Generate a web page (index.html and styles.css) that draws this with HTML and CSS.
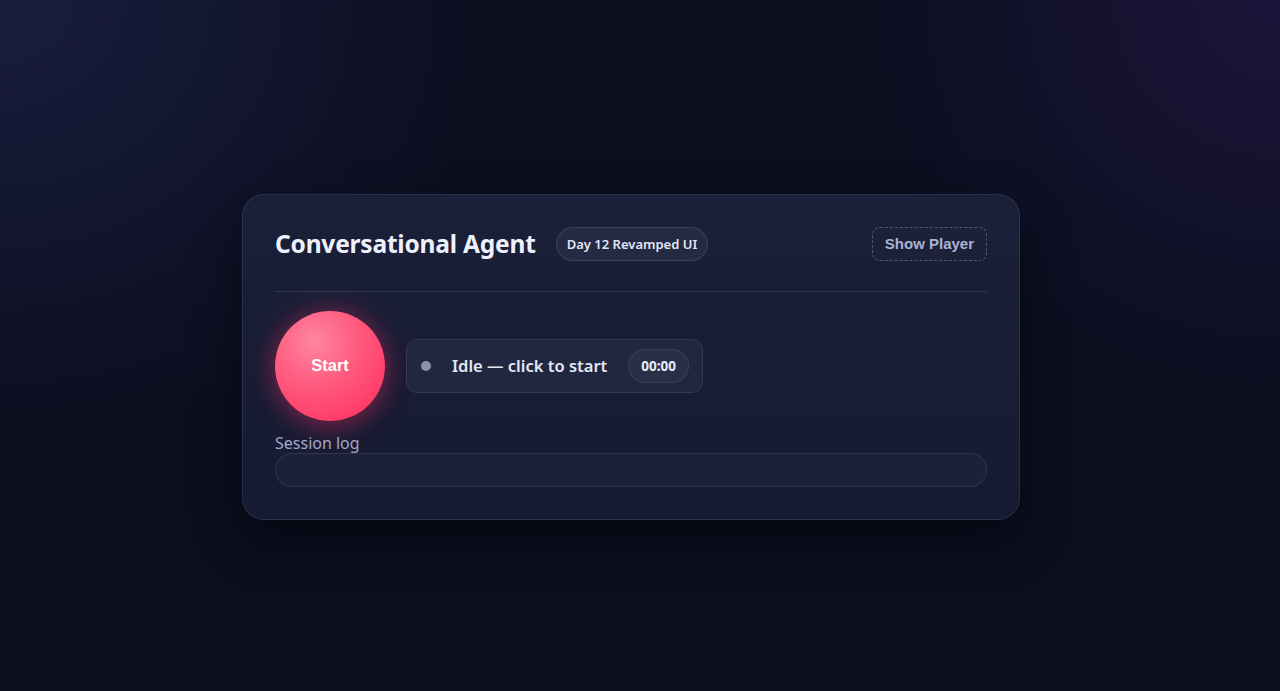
FILE: index.html
```html
<!DOCTYPE html>
<html lang="en">
<head>
<meta charset="utf-8">
<title>Conversational Agent</title>
<link rel="stylesheet" href="styles.css">
</head>
<body>
<main class="stage">
  <section class="card">
    <header class="card-header">
      <div class="title-group">
        <h1 class="title">Conversational Agent</h1>
        <span class="badge">Day 12 Revamped UI</span>
      </div>
      <button class="ghost-btn">Show Player</button>
    </header>
    <div class="divider"></div>
    <div class="controls">
      <button class="start-btn">Start</button>
      <div class="status">
        <span class="status-dot"></span>
        <span class="status-text">Idle — click to start</span>
        <span class="timer">00:00</span>
      </div>
    </div>
    <div class="log">
      <div class="log-label">Session log</div>
      <div class="log-box"></div>
    </div>
  </section>
</main>
</body>
</html>
```

FILE: styles.css
```css
* { box-sizing: border-box; }
html, body { margin: 0; height: 100%; }
body {
  font-family: "Noto Sans", "Open Sans", sans-serif;
  color: #e6e9f5;
  background:
    radial-gradient(ellipse 500px 440px at 0% 0%, rgba(34,36,78,0.65), rgba(34,36,78,0) 100%),
    radial-gradient(ellipse 420px 400px at 100% 0%, rgba(40,24,78,0.6), rgba(40,24,78,0) 100%),
    #0b0f1f;
}
.stage {
  min-height: 100vh;
  display: flex;
  align-items: center;
  justify-content: center;
  padding: 22px 18px 0 0;
}
.card {
  width: 778px;
  padding: 32px 32px 32px 32px;
  border-radius: 22px;
  background: linear-gradient(180deg, #1b2039 0%, #161a32 100%);
  border: 1px solid rgba(150,160,210,0.14);
  box-shadow: 0 20px 50px rgba(0,0,0,0.45);
}
.card-header {
  display: flex;
  align-items: center;
  justify-content: space-between;
  height: 34px;
}
.title-group { display: flex; align-items: center; gap: 20px; }
.title {
  margin: 0;
  font-size: 24.5px;
  font-weight: 700;
  color: #eef1fb;
  letter-spacing: -0.2px;
}
.badge {
  height: 34px;
  display: inline-flex;
  align-items: center;
  padding: 0 10px;
  border-radius: 17px;
  background: #252a44;
  border: 1px solid rgba(160,170,220,0.18);
  font-size: 13px;
  font-weight: 600;
  color: #e2e6f4;
}
.ghost-btn {
  height: 34px;
  padding: 0 12px;
  border-radius: 8px;
  border: 1px dashed rgba(150,165,215,0.42);
  background: #1c2138;
  color: #a9b3d6;
  font-family: "Liberation Sans", Arial, sans-serif;
  font-weight: 700;
  font-size: 15px;
}
.divider {
  height: 1px;
  background: rgba(150,160,210,0.16);
  margin: 30px 0 19px;
}
.controls {
  display: flex;
  align-items: center;
  gap: 21px;
}
.start-btn {
  width: 110px;
  height: 110px;
  border-radius: 50%;
  border: none;
  background: radial-gradient(circle at 36% 28%, #ff86a0 0%, #ff5c80 40%, #ff3a68 80%, #ff3563 100%);
  box-shadow: 0 0 28px rgba(255,50,100,0.35), 0 8px 24px rgba(255,50,100,0.2);
  color: #fff;
  font-family: "Liberation Sans", Arial, sans-serif;
  font-weight: 700;
  font-size: 16.5px;
  flex: none;
}
.status {
  height: 54px;
  display: flex;
  align-items: center;
  padding: 0 13px 0 14px;
  border-radius: 12px;
  background: #222740;
  border: 1px solid rgba(150,160,210,0.14);
}
.status-dot {
  width: 10px; height: 10px; border-radius: 50%;
  background: #8a91a9;
  margin-right: 21px;
}
.status-text {
  font-size: 16.5px;
  font-weight: 600;
  color: #e4e8f5;
  margin-right: 21px;
}
.timer {
  height: 34px;
  display: inline-flex;
  align-items: center;
  padding: 0 12px;
  border-radius: 17px;
  background: #2a2f48;
  border: 1px solid rgba(160,170,220,0.12);
  font-size: 13.5px;
  font-weight: 700;
  color: #e8ebf6;
}
.log { margin-top: 12px; }
.log-label {
  font-size: 16px;
  color: #a1a8c8;
  line-height: 20px;
}
.log-box {
  height: 34px;
  border-radius: 17px;
  background: #1d2039;
  border: 1px solid rgba(150,160,210,0.16);
}
```
